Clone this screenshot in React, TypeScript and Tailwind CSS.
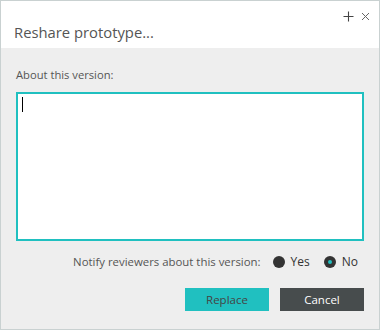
import React from "react";

export default function App() {
  return (
    <div
      className="w-[380px] h-[330px] border border-[#c9d1d1] bg-[#eeeeee] flex flex-col text-[#555555]"
      style={{ fontFamily: '"Open Sans", "Noto Sans", sans-serif' }}
    >
      <div className="h-[47px] bg-white relative shrink-0">
        <svg className="absolute left-[342px] top-[10px]" width="11" height="11" viewBox="0 0 11 11">
          <path d="M5.5 0.5v10M0.5 5.5h10" stroke="#444" strokeWidth="1.1" />
        </svg>
        <svg className="absolute left-[360px] top-[11px]" width="9" height="9" viewBox="0 0 9 9">
          <path d="M1 1l7 7M8 1l-7 7" stroke="#666" strokeWidth="1" />
        </svg>
        <div className="pl-[13px] pt-[21px] text-[14.8px] leading-[20px] text-[#555]">
          Reshare prototype...
        </div>
      </div>
      <div className="flex flex-col px-[15px] pt-[19px]">
        <div className="text-[11.2px] leading-[16px]">About this version:</div>
        <div className="mt-[9px] h-[149px] border-2 border-[#20c0c0] bg-white relative">
          <div className="absolute left-[4px] top-[3px] w-px h-[15px] bg-black" />
        </div>
        <div className="mt-[13px] flex items-center justify-end gap-[6px] text-[11.4px] leading-[16px] pr-[6px]">
          <span className="mr-[6px]">Notify reviewers about this version:</span>
          <span className="w-[12px] h-[12px] rounded-full bg-[#333]" />
          <span className="font-medium text-[#333] mr-[8px] text-[12px]">Yes</span>
          <span className="w-[12px] h-[12px] rounded-full bg-[#333] flex items-center justify-center">
            <span className="w-[4px] h-[4px] rounded-full bg-[#20c0c0]" />
          </span>
          <span className="font-medium text-[#333] text-[12px]">No</span>
        </div>
        <div className="mt-[18px] flex justify-end gap-[11px]">
          <button className="w-[84px] h-[23px] bg-[#20c0c0] text-[#444] text-[11.5px]">Replace</button>
          <button className="w-[84px] h-[23px] bg-[#474c4d] text-white text-[11.5px]">Cancel</button>
        </div>
      </div>
    </div>
  );
}
